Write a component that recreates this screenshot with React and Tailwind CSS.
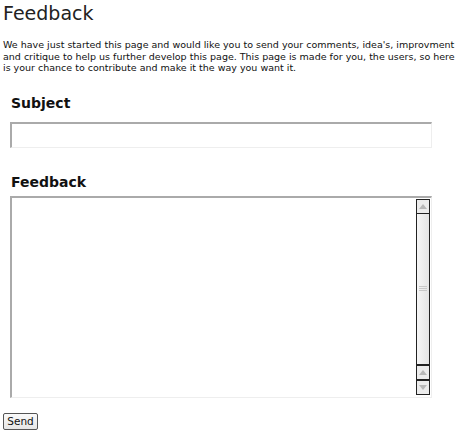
import React from 'react';

const ArrowUp = () => (
  <svg width="8" height="5" viewBox="0 0 8 5" className="block">
    <path d="M0 5 L4 0 L8 5 Z" fill="#b8b8b8" />
  </svg>
);

const ArrowDown = () => (
  <svg width="8" height="5" viewBox="0 0 8 5" className="block">
    <path d="M0 0 L4 5 L8 0 Z" fill="#b8b8b8" />
  </svg>
);

const ScrollButton = ({ children }) => (
  <div className="h-[15px] border border-[#222] bg-[#ececec] flex items-center justify-center">
    {children}
  </div>
);

const FeedbackPage = () => {
  return (
    <div className="w-[461px] h-[432px] bg-white text-[#111] font-['DejaVu_Sans',sans-serif] overflow-hidden">
      <h1 className="pl-[3px] pt-[1px] text-[19px] leading-[24px] text-[#222]">Feedback</h1>

      <p className="mt-[14px] px-[3px] text-[9.5px] leading-[11.5px] whitespace-nowrap">
        We have just started this page and would like you to send your comments, idea's, improvment
        <br />
        and critique to help us further develop this page. This page is made for you, the users, so here
        <br />
        is your chance to contribute and make it the way you want it.
      </p>

      <form className="pl-[10px]" onSubmit={(e) => e.preventDefault()}>
        <h2 className="mt-[20px] pl-[1px] text-[14px] leading-[18px] font-bold">Subject</h2>
        <input
          type="text"
          className="mt-[10px] block w-[422px] h-[26px] border-t-2 border-l-2 border-r border-b border-t-[#aaa] border-l-[#aaa] border-r-[#eee] border-b-[#eee] outline-none"
        />

        <h2 className="mt-[25px] pl-[1px] text-[14px] leading-[18px] font-bold">Feedback</h2>
        <div className="mt-[5px] flex w-[422px] h-[202px] border-t-2 border-l-2 border-r border-b border-t-[#aaa] border-l-[#aaa] border-r-[#eee] border-b-[#eee]">
          <textarea className="flex-1 resize-none outline-none border-0" />
          <div className="w-[14px] mr-[1px] mt-[1px] mb-[2px] flex flex-col">
            <ScrollButton><ArrowUp /></ScrollButton>
            <div className="flex-1 border border-[#222] border-t-0 bg-gradient-to-r from-[#f6f6f6] to-[#e4e4e4] flex flex-col items-center justify-center gap-[1px]">
              <div className="w-[8px] h-px bg-[#c8c8c8]" />
              <div className="w-[8px] h-px bg-[#c8c8c8]" />
              <div className="w-[8px] h-px bg-[#c8c8c8]" />
            </div>
            <ScrollButton><ArrowUp /></ScrollButton>
            <ScrollButton><ArrowDown /></ScrollButton>
          </div>
        </div>
      </form>

      <button
        type="button"
        className="mt-[15px] ml-[3px] block w-[35px] h-[17px] border border-[#555] rounded-[2px] bg-gradient-to-b from-[#fafafa] to-[#e6e6e6] text-[10.5px] leading-none text-[#111]"
      >
        Send
      </button>
    </div>
  );
};

export default FeedbackPage;
